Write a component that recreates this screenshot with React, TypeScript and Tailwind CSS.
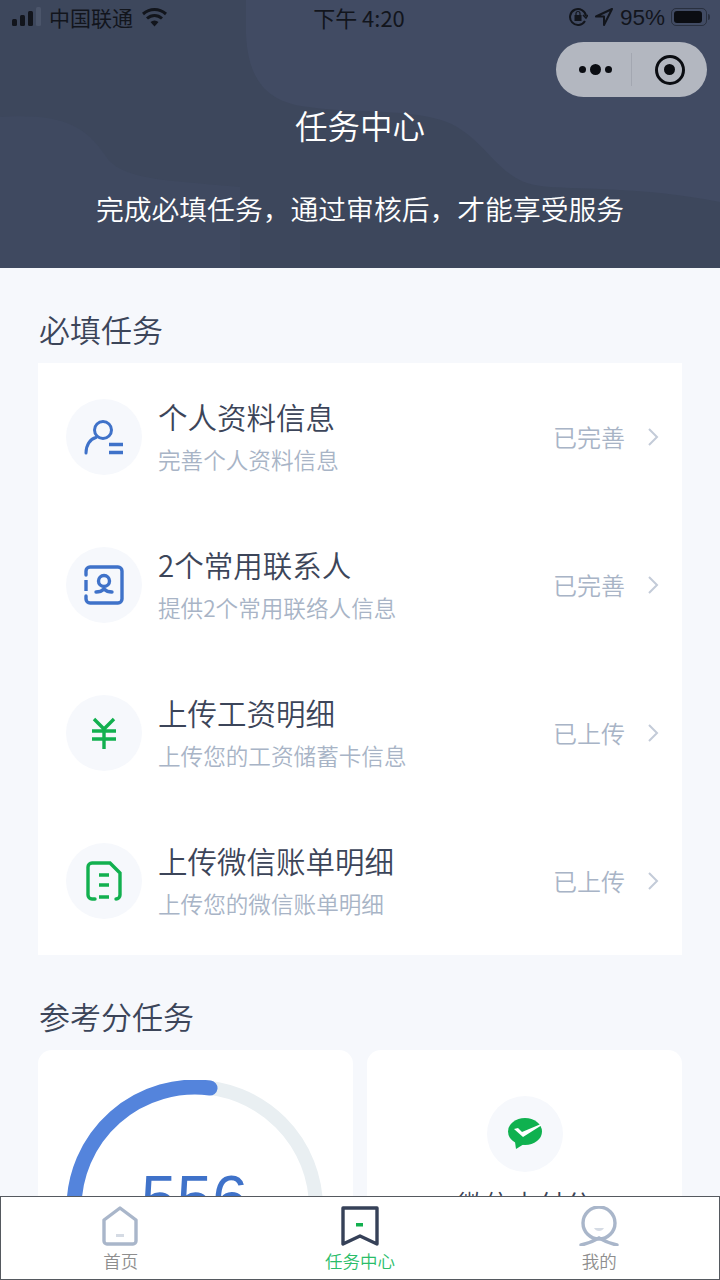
import React from "react";

const cjk = "font-['Noto_Sans_CJK_SC','Noto_Sans',sans-serif]";

const tasks = [
	{ title: "个人资料信息", desc: "完善个人资料信息", status: "已完善", icon: "profile" },
	{ title: "2个常用联系人", desc: "提供2个常用联络人信息", status: "已完善", icon: "contact" },
	{ title: "上传工资明细", desc: "上传您的工资储蓄卡信息", status: "已上传", icon: "yen" },
	{ title: "上传微信账单明细", desc: "上传您的微信账单明细", status: "已上传", icon: "bill" },
];

const TaskIcon: React.FC<{ name: string }> = ({ name }) => {
	if (name === "profile") {
		return (
			<svg width="40" height="35" viewBox="0 0 40 35" fill="none" stroke="#3f72c9" strokeWidth="3">
				<circle cx="19" cy="10" r="8.500" />
				<path d="M2 33c0-8 4-14 10-15.500" strokeLinecap="round" />
				<path d="M25 24.500h14M25 32.500h14" strokeWidth="3.400" />
			</svg>
		);
	}
	if (name === "contact") {
		return (
			<svg width="40" height="40" viewBox="0 0 40 40" fill="none" stroke="#3f72c9" strokeWidth="3.4">
				<path d="M2 10V6a4 4 0 0 1 4-4h28a4 4 0 0 1 4 4v28a4 4 0 0 1-4 4H6a4 4 0 0 1-4-4v-3" strokeLinecap="round" />
				<path d="M2 15v11" />
				<circle cx="20" cy="16" r="5.500" />
				<path d="M12 27c4 0 6-1 8-3 2 2 4 3 8 3" strokeLinecap="round" />
			</svg>
		);
	}
	if (name === "yen") {
		return (
			<svg width="26" height="32" viewBox="0 0 26 32" fill="none" stroke="#12b04f" strokeWidth="3.4">
				<path d="M3 2l10 10L23 2M1 14h24M1 22h24M13 12v20" />
			</svg>
		);
	}
	return (
		<svg width="36" height="40" viewBox="0 0 36 40" fill="none" stroke="#12b04f" strokeWidth="3.4" strokeLinecap="round">
			<path d="M9 38H6a4 4 0 0 1-4-4V6a4 4 0 0 1 4-4h18l10 10v22a4 4 0 0 1-4 4" />
			<path d="M13 14h10M13 24h10M13 36h10" strokeLinecap="butt" />
		</svg>
	);
};

const TaskRow: React.FC<{ title: string; desc: string; status: string; icon: string }> = ({ title, desc, status, icon }) => (
	<div className="flex h-[148px] items-center pl-[28px] pr-[23px]">
		<div className="flex h-[76px] w-[76px] shrink-0 items-center justify-center rounded-full bg-[#f6f8fc]">
			<TaskIcon name={icon} />
		</div>
		<div className="ml-[16px] flex-1">
			<div className="mt-[-2px] text-[29.5px] leading-[40px] font-[350] text-[#3c4559]">{title}</div>
			<div className="mt-[8px] text-[22.6px] leading-[32px] font-[350] text-[#a8b4c6]">{desc}</div>
		</div>
		<span className="text-[24px] font-[350] text-[#a8b4c6]">{status}</span>
		<svg className="ml-[22px]" width="12" height="20" viewBox="0 0 12 20" fill="none" stroke="#c3cbd8" strokeWidth="2">
			<path d="M2 2l8 8-8 8" />
		</svg>
	</div>
);

const StatusBar: React.FC = () => (
	<div className="flex h-[34px] items-center justify-between pl-[12px] pr-[10px] text-[#12151c]">
		<div className="flex w-[240px] items-center">
			<svg width="30" height="20" viewBox="0 0 30 20" fill="#12151c">
				<rect x="0" y="12" width="5" height="7" rx="1.5" />
				<rect x="8" y="8" width="5" height="11" rx="1.5" />
				<rect x="16" y="4" width="5" height="15" rx="1.5" />
				<rect x="24" y="0" width="5" height="19" rx="1.5" fill="#4b556a" />
			</svg>
			<span className="ml-[7px] text-[21px] leading-none">中国联通</span>
			<svg className="ml-[8px]" width="27" height="20" viewBox="0 0 27 20" fill="none" stroke="#12151c" strokeWidth="3">
				<path d="M2 7c7-6 16-6 23 0M6 11.500c4.500-4 10.500-4 15 0" />
				<path d="M9.500 15c2.500-2 5.500-2 8 0l-4 4.500z" fill="#12151c" stroke="none" />
			</svg>
		</div>
		<span className="ml-[-4px] text-[22px] leading-none">下午 4:20</span>
		<div className="flex w-[240px] items-center justify-end">
			<svg width="20" height="20" viewBox="0 0 20 20" fill="none" stroke="#12151c" strokeWidth="2">
				<path d="M17 14a8 8 0 1 1 1-5" />
				<path d="M15 8l3 3 2-3" strokeWidth="1.500" />
				<rect x="6.500" y="8" width="7" height="6" fill="#12151c" stroke="none" />
				<path d="M8 8V6.500a2 2 0 0 1 4 0V8" strokeWidth="1.200" />
			</svg>
			<svg className="ml-[6px]" width="20" height="20" viewBox="0 0 20 20" fill="none" stroke="#12151c" strokeWidth="2">
				<path d="M18 2L2 9.500h8V18z" strokeLinejoin="round" />
			</svg>
			<span className="mt-[3px] ml-[6px] font-['Liberation_Sans',sans-serif] text-[22.500px] leading-none">95%</span>
			<div className="ml-[6px] flex h-[18px] w-[36px] items-center rounded-[5px] border border-[#12151c80] p-[2px]">
				<div className="h-full w-[28px] rounded-[3px] bg-[#0b0d12]" />
			</div>
			<div className="ml-[1px] h-[6px] w-[2px] rounded-r bg-[#12151c80]" />
		</div>
	</div>
);

const Header: React.FC = () => (
	<div className="relative h-[268px] shrink-0 overflow-hidden bg-[#3d475c]">
		<svg className="absolute inset-0" width="720" height="268" viewBox="0 0 720 268">
			<path d="M246 0v34c2 45 20 66 55 72 50 8 100 2 140 14 45 14 55 62 100 66 30 4 100 0 179 16V0z" fill="#414b63" />
			<path d="M0 117c60-4 85 8 105 38 15 25 60 25 135 32v81H0z" fill="#3f4960" />
		</svg>
		<div className="relative">
			<StatusBar />
			<div className="absolute top-[42px] right-[13px] flex h-[55px] w-[151px] items-center rounded-full bg-[#b3b7c0]">
				<div className="flex w-[75px] items-center justify-center gap-[4px] pl-[4px]">
					<span className="h-[7px] w-[7px] rounded-full bg-[#0b0d12]" />
					<span className="h-[11px] w-[11px] rounded-full bg-[#0b0d12]" />
					<span className="h-[7px] w-[7px] rounded-full bg-[#0b0d12]" />
				</div>
				<div className="h-[33px] w-px bg-[#a3a7b1]" />
				<div className="flex flex-1 items-center justify-center">
					<div className="flex h-[30px] w-[30px] items-center justify-center rounded-full border-[3px] border-[#0b0d12]">
						<span className="h-[11px] w-[11px] rounded-full bg-[#0b0d12]" />
					</div>
				</div>
			</div>
			<h1 className="mt-[69px] text-center text-[32.5px] leading-[44px] font-[350] text-white">任务中心</h1>
			<p className="mt-[41px] text-center text-[27.8px] leading-[40px] font-[350] text-white">完成必填任务，通过审核后，才能享受服务</p>
		</div>
	</div>
);

const ScoreCards: React.FC = () => (
	<div className="grid grid-cols-2 gap-[14px]">
		<div className="flex h-[320px] justify-center rounded-t-[14px] bg-white pt-[30px]">
			<div className="relative ml-[-2px] h-[256px] w-[256px]">
				<svg className="absolute inset-0" width="256" height="256" viewBox="0 0 256 256" fill="none" strokeWidth="14">
					<circle cx="128" cy="128" r="121" stroke="#e9eff2" />
					<path d="M7 128A121 121 0 0 1 143 8" stroke="#5484dc" strokeWidth="15" strokeLinecap="round" />
				</svg>
				<div className="relative pt-[82px] text-center font-['Liberation_Sans',sans-serif] text-[64px] leading-[74px] text-[#3f72c9]">556</div>
			</div>
		</div>
		<div className="flex h-[320px] flex-col items-center rounded-t-[14px] bg-white pt-[46px]">
			<div className="flex h-[76px] w-[76px] items-center justify-center rounded-full bg-[#f6f8fc]">
				<svg className="mt-[-2px]" width="34" height="31" viewBox="0 0 34 31">
					<ellipse cx="17" cy="13.500" rx="17" ry="13.500" fill="#0fb14f" />
					<path d="M7 24l1 7 8-5z" fill="#0fb14f" />
					<path d="M6 11l4-1 4 4L33 6l1 1-19 12z" fill="#fff" />
				</svg>
			</div>
			<div className="mt-[12px] text-[27px] leading-[40px] font-[350] text-[#3c4559]">微信支付分</div>
		</div>
	</div>
);

const TabItem: React.FC<{ label: string; active?: boolean; children: React.ReactNode }> = ({ label, active, children }) => (
	<div className="flex flex-1 flex-col items-center pt-[8px]">
		<div className="flex h-[42px] items-center justify-center">{children}</div>
		<span className={active ? "mt-[2px] text-[17.500px] leading-[24px] font-[350] text-[#2bbd69]" : "mt-[2px] text-[17.500px] leading-[24px] font-[350] text-[#8e8e8e]"}>
			{label}
		</span>
	</div>
);

const TabBar: React.FC = () => (
	<div className="absolute right-0 bottom-0 left-0 flex h-[84px] border border-[#55595f] bg-white">
		<TabItem label="首页">
			<svg className="mr-[1px]" width="36" height="40" viewBox="0 0 36 40" fill="none">
				<path d="M18 2L34 14v21a3 3 0 0 1-3 3H5a3 3 0 0 1-3-3V14z" stroke="#a9b6ca" strokeWidth="3.400" strokeLinejoin="round" />
				<rect x="14" y="28" width="8" height="3" fill="#d5dbe4" />
			</svg>
		</TabItem>
		<TabItem label="任务中心" active>
			<svg width="38" height="40" viewBox="0 0 38 40" fill="none">
				<path d="M2 2h34v36l-17-8-17 8z" stroke="#364158" strokeWidth="3.400" strokeLinejoin="round" />
				<rect x="15" y="17" width="7" height="3.500" fill="#12b04f" />
			</svg>
		</TabItem>
		<TabItem label="我的">
			<svg width="40" height="40" viewBox="0 0 40 40" fill="none" stroke="#a9b6ca" strokeWidth="3.400">
				<ellipse cx="20" cy="17" rx="16" ry="16" />
				<path d="M2 39c5-1 11-3 18-7 7 4 13 6 18 7" strokeLinecap="round" />
				<path d="M15 22h10c-2 4-8 4-10 0z" fill="#d5dbe4" stroke="none" />
			</svg>
		</TabItem>
	</div>
);

export default function App() {
	return (
		<div className={`relative flex h-[1280px] w-[720px] flex-col overflow-hidden bg-[#f6f8fc] ${cjk}`}>
			<Header />
			<div className="px-[38px]">
				<h2 className="mt-[39px] pl-[1px] text-[31px] leading-[44px] font-[350] text-[#3c4559]">必填任务</h2>
				<div className="mt-[12px] bg-white">
					{tasks.map((task) => (
						<TaskRow key={task.title} {...task} />
					))}
				</div>
				<h2 className="mt-[39px] mb-[12px] pl-[1px] text-[31px] leading-[44px] font-[350] text-[#3c4559]">参考分任务</h2>
				<ScoreCards />
			</div>
			<TabBar />
		</div>
	);
}
